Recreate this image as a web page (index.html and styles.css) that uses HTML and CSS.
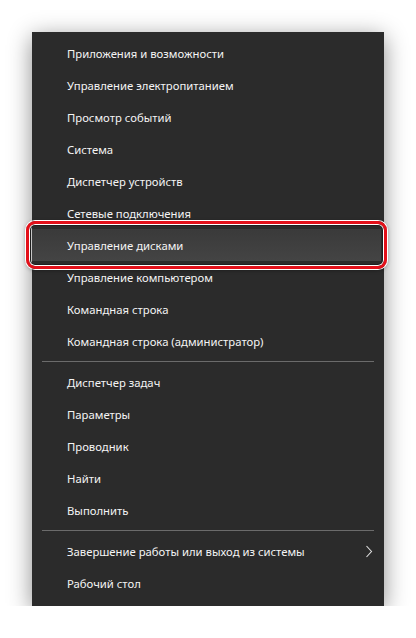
FILE: index.html
```html
<!DOCTYPE html>
<html lang="ru">
<head>
<meta charset="utf-8">
<link rel="stylesheet" href="styles.css">
</head>
<body>
<div class="menu">
  <div class="group">
    <div class="item">Приложения и возможности</div>
    <div class="item">Управление электропитанием</div>
    <div class="item">Просмотр событий</div>
    <div class="item">Система</div>
    <div class="item">Диспетчер устройств</div>
    <div class="item">Сетевые подключения</div>
    <div class="item active">Управление дисками<span class="mark"></span></div>
    <div class="item">Управление компьютером</div>
    <div class="item">Командная строка</div>
    <div class="item">Командная строка (администратор)</div>
  </div>
  <div class="sep"></div>
  <div class="group">
    <div class="item">Диспетчер задач</div>
    <div class="item">Параметры</div>
    <div class="item">Проводник</div>
    <div class="item">Найти</div>
    <div class="item">Выполнить</div>
  </div>
  <div class="sep"></div>
  <div class="group">
    <div class="item sub">Завершение работы или выход из системы
      <svg class="chev" width="8" height="13" viewBox="0 0 8 13"><path d="M1.5 1 L6.5 6.5 L1.5 12" fill="none" stroke="#e0e0e0" stroke-width="1.1"/></svg>
    </div>
    <div class="item">Рабочий стол</div>
  </div>
</div>
</body>
</html>
```
FILE: styles.css
```css
html, body {
  margin: 0;
  padding: 0;
  background: #ffffff;
}
body {
  padding: 32px 0 0 32px;
  font-family: "Noto Sans", "Open Sans", sans-serif;
}
.menu {
  width: 352px;
  box-sizing: border-box;
  background: #2b2b2b;
  padding: 5px 0 7px;
  box-shadow: 0 5px 22px rgba(0, 0, 0, 0.45);
}
.group {
  display: flex;
  flex-direction: column;
}
.item {
  position: relative;
  height: 32px;
  display: flex;
  align-items: center;
  padding-left: 35px;
  padding-right: 10px;
  color: #f4f4f4;
  font-size: 11.3px;
}
.item.active {
  background: linear-gradient(#3a3a3a, #444444);
  margin: 0 3px 0 0;
}
.mark {
  position: absolute;
  left: -6px;
  right: -6px;
  top: -8px;
  bottom: -8px;
  border: 3.5px solid #e3101a;
  border-radius: 9px;
  box-shadow: 0 0 0 1px #ffffff, inset 0 0 0 1px #ffffff, inset 0 0 0 2px #1e1e1e, 0 1px 4px rgba(0,0,0,0.4);
  pointer-events: none;
}
.sub {
  justify-content: space-between;
}
.chev {
  display: block;
  margin-right: 1px;
}
.sep {
  height: 1px;
  background: #6b6b6b;
  margin: 4px 10px;
}
```
